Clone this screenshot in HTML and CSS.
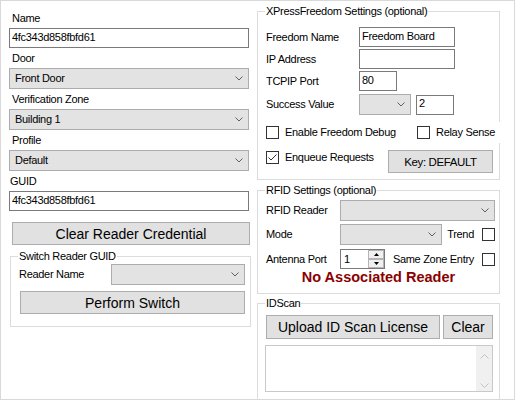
FILE: index.html
```html
<!DOCTYPE html>
<html lang="en">
<head>
    <meta charset="UTF-8">
    <title>Reader Settings</title>
    <link rel="stylesheet" href="styles.css">
</head>
<body>

<div class="window">

    <!-- Dados do leitor -->
    <div class="col-left">
        <div class="field first">
            <label>Name</label>
            <input class="textbox" type="text" value="4fc343d858fbfd61">
        </div>
        <div class="field">
            <label>Door</label>
            <div class="combo"><span>Front Door</span><svg class="chev" width="8" height="5" viewBox="0 0 8 5"><path d="M0.5 0.5 L4 4 L7.5 0.5"/></svg></div>
        </div>
        <div class="field">
            <label>Verification Zone</label>
            <div class="combo"><span>Building 1</span><svg class="chev" width="8" height="5" viewBox="0 0 8 5"><path d="M0.5 0.5 L4 4 L7.5 0.5"/></svg></div>
        </div>
        <div class="field">
            <label>Profile</label>
            <div class="combo"><span>Default</span><svg class="chev" width="8" height="5" viewBox="0 0 8 5"><path d="M0.5 0.5 L4 4 L7.5 0.5"/></svg></div>
        </div>
        <div class="field">
            <label class="guid-lbl">GUID</label>
            <input class="textbox" type="text" value="4fc343d858fbfd61">
        </div>

        <button class="btn btn-clear-cred">Clear Reader Credential</button>

        <fieldset class="group group-switch">
            <legend>Switch Reader GUID</legend>
            <div class="group-body">
                <div class="row">
                    <span class="row-lbl">Reader Name</span>
                    <div class="combo combo-reader"><span></span><svg class="chev" width="8" height="5" viewBox="0 0 8 5"><path d="M0.5 0.5 L4 4 L7.5 0.5"/></svg></div>
                </div>
                <button class="btn btn-switch">Perform Switch</button>
            </div>
        </fieldset>
    </div>

    <!-- Configuracoes opcionais -->
    <div class="col-right">
        <fieldset class="group">
            <legend>XPressFreedom Settings (optional)</legend>
            <div class="group-body body-xpress">
                <div class="row">
                    <span class="row-lbl">Freedom Name</span>
                    <input class="textbox tb-wide" type="text" value="Freedom Board">
                </div>
                <div class="row gap2">
                    <span class="row-lbl">IP Address</span>
                    <input class="textbox tb-wide" type="text" value="">
                </div>
                <div class="row gap2">
                    <span class="row-lbl">TCPIP Port</span>
                    <input class="textbox tb-small" type="text" value="80">
                </div>
                <div class="row gap3">
                    <span class="row-lbl">Success Value</span>
                    <div class="combo combo-success"><span></span><svg class="chev" width="8" height="5" viewBox="0 0 8 5"><path d="M0.5 0.5 L4 4 L7.5 0.5"/></svg></div>
                    <input class="textbox tb-small tb-value" type="text" value="2">
                </div>
                <div class="row gap7">
                    <div class="check-item item-debug"><span class="check"></span>Enable Freedom Debug</div>
                    <div class="check-item item-relay"><span class="check"></span>Relay Sense</div>
                </div>
                <div class="row row-top gap7">
                    <div class="check-item item-enqueue">
                        <span class="check"><svg width="11" height="11" viewBox="0 0 11 11"><polyline points="1.5,5.5 4,8 9.5,2.5"/></svg></span>Enqueue Requests
                    </div>
                    <button class="btn btn-key">Key: DEFAULT</button>
                </div>
            </div>
        </fieldset>

        <fieldset class="group group-rfid">
            <legend>RFID Settings (optional)</legend>
            <div class="group-body body-rfid">
                <div class="row">
                    <span class="row-lbl lbl-rfid">RFID Reader</span>
                    <div class="combo combo-rfid"><span></span><svg class="chev" width="8" height="5" viewBox="0 0 8 5"><path d="M0.5 0.5 L4 4 L7.5 0.5"/></svg></div>
                </div>
                <div class="row gap3">
                    <span class="row-lbl lbl-rfid">Mode</span>
                    <div class="combo combo-mode"><span></span><svg class="chev" width="8" height="5" viewBox="0 0 8 5"><path d="M0.5 0.5 L4 4 L7.5 0.5"/></svg></div>
                    <div class="check-right">Trend<span class="check"></span></div>
                </div>
                <div class="row gap4">
                    <span class="row-lbl lbl-rfid">Antenna Port</span>
                    <div class="numeric">
                        <span>1</span>
                        <div class="spin">
                            <div class="spin-btn"><svg width="5" height="3" viewBox="0 0 5 3"><polygon points="2.5,0 5,3 0,3"/></svg></div>
                            <div class="spin-btn"><svg width="5" height="3" viewBox="0 0 5 3"><polygon points="0,0 5,0 2.5,3"/></svg></div>
                        </div>
                    </div>
                    <div class="check-right">Same Zone Entry<span class="check"></span></div>
                </div>
                <div class="notice">No Associated Reader</div>
            </div>
        </fieldset>

        <fieldset class="group group-idscan">
            <legend>IDScan</legend>
            <div class="group-body body-idscan">
                <div class="row">
                    <button class="btn btn-upload">Upload ID Scan License</button>
                    <button class="btn btn-clear">Clear</button>
                </div>
                <div class="memo">
                    <div class="vscroll">
                        <svg width="9" height="5" viewBox="0 0 9 5"><path d="M0.5 4.5 L4.5 0.5 L8.5 4.5"/></svg>
                        <svg width="9" height="5" viewBox="0 0 9 5"><path d="M0.5 0.5 L4.5 4.5 L8.5 0.5"/></svg>
                    </div>
                </div>
            </div>
        </fieldset>
    </div>

</div>

</body>
</html>
```

FILE: styles.css
```css
* {
    box-sizing: border-box;
}

body {
    margin: 0;
    font-family: "Liberation Sans", Arial, sans-serif;
    font-size: 11px;
    letter-spacing: -0.3px;
    color: #000;
    background-color: #fff;
}

.window {
    width: 515px;
    height: 400px;
    border: 1px solid #d9d9d9;
    display: flex;
    gap: 6px;
    padding-left: 8px;
}

/* Coluna da esquerda */
.col-left {
    width: 242px;
    padding-top: 11px;
    display: flex;
    flex-direction: column;
}

.col-right {
    width: 243px;
    padding-top: 4px;
    display: flex;
    flex-direction: column;
}

.field {
    display: flex;
    flex-direction: column;
    gap: 3px;
    margin-top: 4px;
}

.field.first {
    margin-top: 0;
}

.field label {
    height: 13px;
    line-height: 13px;
    padding-left: 3px;
}

.field .guid-lbl {
    padding-left: 1px;
}

/* Controles */
.textbox {
    width: 240px;
    height: 20px;
    margin: 0;
    border: 1px solid #7a7a7a;
    padding: 0 2px 3px;
    font: inherit;
    letter-spacing: inherit;
    color: #000;
    background-color: #fff;
    outline: none;
}

.combo {
    width: 240px;
    height: 21px;
    border: 1px solid #acacac;
    background-color: #e3e3e3;
    display: flex;
    align-items: center;
    justify-content: space-between;
    padding: 0 5px;
    line-height: 13px;
}

.chev path {
    fill: none;
    stroke: #606060;
}

.btn {
    margin: 0;
    padding: 0;
    border: 1px solid #adadad;
    background-color: #e1e1e1;
    font-family: "Liberation Sans", Arial, sans-serif;
    font-size: 14px;
    letter-spacing: 0;
    color: #000;
    line-height: 16px;
}

.btn-clear-cred {
    width: 238px;
    height: 23px;
    margin: 11px 0 0 3px;
}

/* Caixas de grupo */
.group {
    margin: 0;
    padding: 0;
    border: 1px solid #dcdcdc;
    min-width: 0;
    width: 243px;
}

.group legend {
    padding: 0 1px;
    margin-left: 7px;
    line-height: 13px;
}

.group-switch {
    width: 241px;
    margin: 5px 0 0 1px;
}

.group-switch .group-body {
    padding: 1px 5px 12px 8px;
}

.row {
    display: flex;
    align-items: center;
}

.row-top {
    align-items: flex-start;
}

.gap2 { margin-top: 2px; }
.gap3 { margin-top: 3px; }
.gap4 { margin-top: 4px; }
.gap7 { margin-top: 7px; }

.row-lbl {
    width: 92px;
    line-height: 13px;
}

.combo-reader {
    width: 134px;
}

.btn-switch {
    width: 225px;
    height: 23px;
    margin: 6px 0 0 1px;
}

/* XPressFreedom */
.body-xpress {
    padding: 9px 4px 6px 8px;
}

.body-xpress .row-lbl {
    width: 93px;
}

.tb-wide {
    width: 96px;
}

.tb-small {
    width: 38px;
}

.combo-success {
    width: 52px;
}

.tb-value {
    margin-left: 5px;
}

.check-item {
    display: flex;
    align-items: center;
    gap: 6px;
    height: 13px;
    line-height: 13px;
    flex: none;
    white-space: nowrap;
}

.check {
    width: 13px;
    height: 13px;
    flex: none;
    border: 1px solid #333;
    background-color: #fff;
    display: flex;
    align-items: center;
    justify-content: center;
}

.check polyline {
    fill: none;
    stroke: #333;
}

.item-debug {
    width: 151px;
}

.item-relay {
    height: 21px;
    padding-right: 8px;
    background-color: #fff;
}

.item-enqueue {
    width: 122px;
    margin-top: 1px;
}

.btn-key {
    width: 105px;
    height: 23px;
    font-size: 11.5px;
    letter-spacing: -0.4px;
}

/* RFID */
.group-rfid {
    margin-top: 4px;
}

.body-rfid {
    padding: 3px 4px 7px 8px;
}

.row-lbl.lbl-rfid {
    width: 74px;
}

.combo-rfid {
    width: 155px;
}

.combo-mode {
    width: 102px;
}

.check-right {
    margin-left: auto;
    display: flex;
    align-items: center;
    gap: 8px;
    line-height: 13px;
    white-space: nowrap;
}

.numeric {
    width: 45px;
    height: 20px;
    border: 1px solid #7a7a7a;
    display: flex;
    align-items: center;
    justify-content: space-between;
    padding-left: 3px;
    line-height: 13px;
}

.spin {
    width: 16px;
    height: 18px;
    display: flex;
    flex-direction: column;
}

.spin-btn {
    flex: 1;
    border: 1px solid #b4b4b4;
    background-color: #f0f0f0;
    display: flex;
    align-items: center;
    justify-content: center;
}

.spin-btn polygon {
    fill: #000;
}

.notice {
    margin: 0 -4px 0 -8px;
    text-align: center;
    font-weight: bold;
    font-size: 14.5px;
    line-height: 17px;
    letter-spacing: 0;
    color: #8b0000;
}

/* IDScan */
.group-idscan {
    margin-top: 3px;
}

.body-idscan {
    padding: 5px 4px 8px 8px;
}

.btn-upload {
    width: 174px;
    height: 24px;
}

.btn-clear {
    width: 50px;
    height: 24px;
    margin-left: 3px;
}

.memo {
    width: 228px;
    height: 47px;
    margin: 6px 0 0 -1px;
    border: 1px solid #c9c9c9;
    display: flex;
    justify-content: flex-end;
}

.vscroll {
    width: 16px;
    background-color: #f0f0f0;
    display: flex;
    flex-direction: column;
    justify-content: space-between;
    align-items: center;
    padding: 8px 0 3px;
}

.vscroll path {
    fill: none;
    stroke: #c2c2c2;
}
```
